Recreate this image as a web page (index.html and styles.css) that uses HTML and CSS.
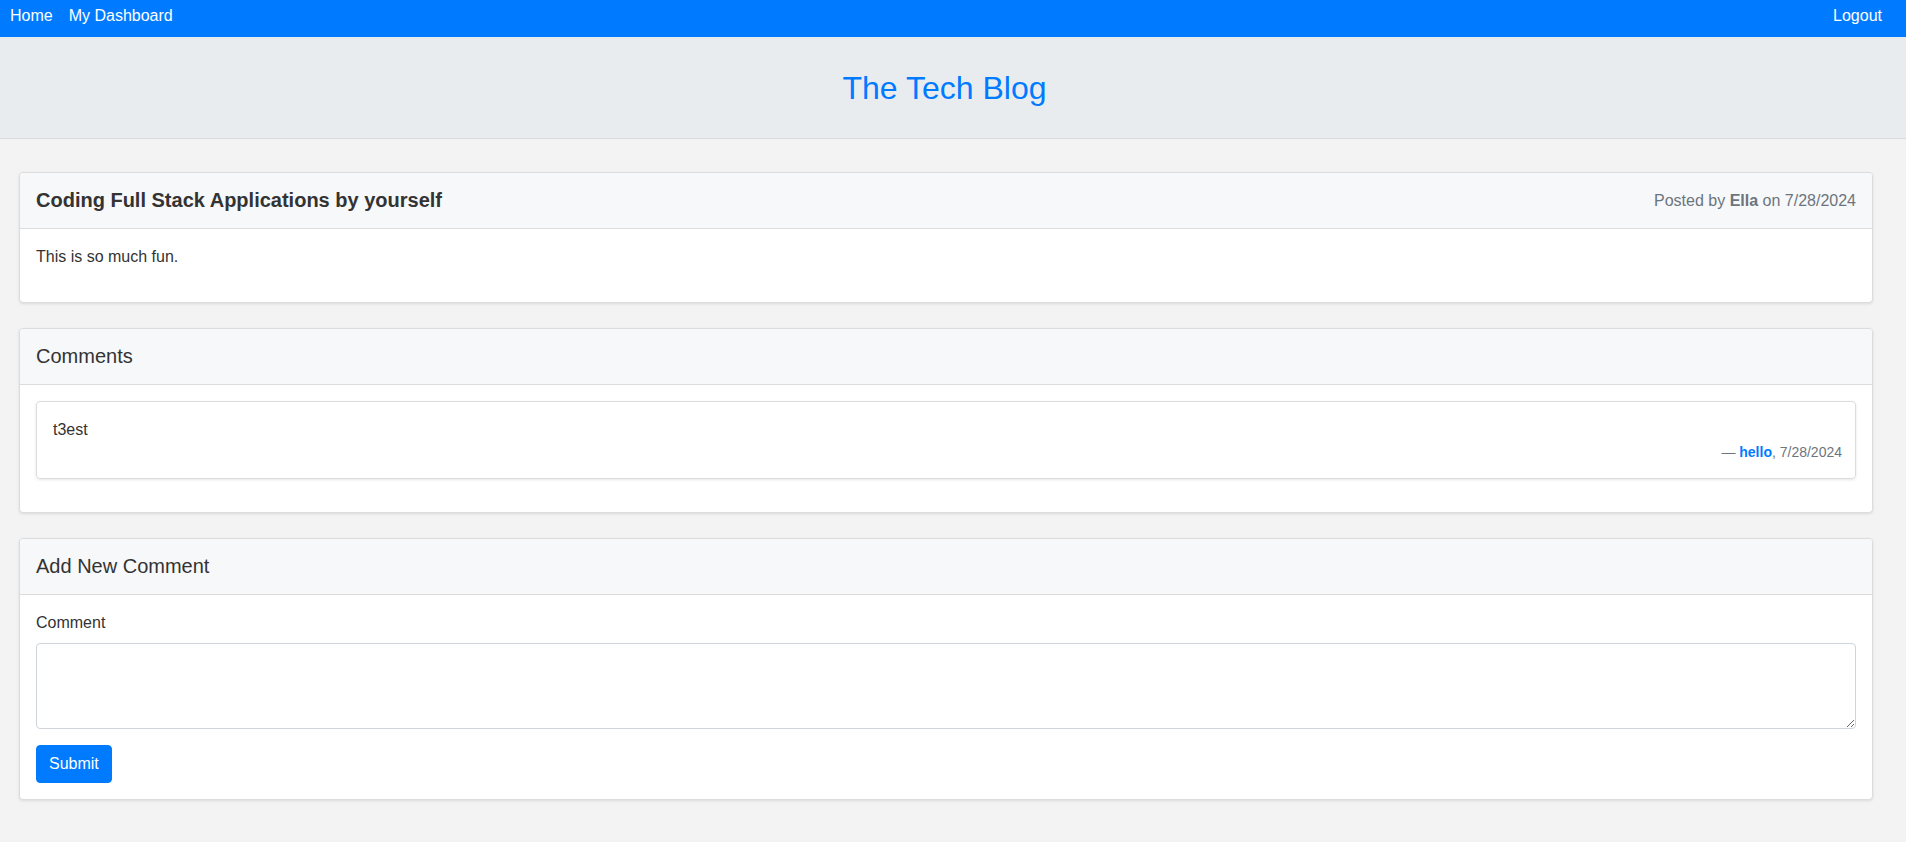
FILE: index.html
```html
<!DOCTYPE html>
<html lang="en">
<head>
<meta charset="utf-8">
<title>The Tech Blog</title>
<link rel="stylesheet" href="styles.css">
</head>
<body>
<nav class="topnav">
  <div class="nav-left">
    <a href="#" class="nav-link">Home</a>
    <a href="#" class="nav-link">My Dashboard</a>
  </div>
  <a href="#" class="nav-link">Logout</a>
</nav>
<header class="masthead">
  <h1 class="site-title">The Tech Blog</h1>
</header>
<main class="content">
  <section class="card">
    <div class="card-header header-split">
      <h2 class="post-title">Coding Full Stack Applications by yourself</h2>
      <span class="post-meta">Posted by <strong>Ella</strong> on 7/28/2024</span>
    </div>
    <div class="card-body">
      <p class="post-text">This is so much fun.</p>
    </div>
  </section>

  <section class="card">
    <div class="card-header">
      <h3 class="section-title">Comments</h3>
    </div>
    <div class="card-body">
      <div class="comment">
        <p class="comment-text">t3est</p>
        <div class="comment-footer">— <strong class="comment-author">hello</strong>, 7/28/2024</div>
      </div>
    </div>
  </section>

  <section class="card">
    <div class="card-header">
      <h3 class="section-title">Add New Comment</h3>
    </div>
    <div class="card-body">
      <form class="comment-form">
        <label class="form-label" for="comment">Comment</label>
        <textarea id="comment" class="form-control" rows="3"></textarea>
        <button type="button" class="btn-submit">Submit</button>
      </form>
    </div>
  </section>
</main>
</body>
</html>
```

FILE: styles.css
```css
* { box-sizing: border-box; }

html, body {
  margin: 0;
  padding: 0;
}

body {
  background: #f3f3f3;
  font-family: "Liberation Sans", Arial, sans-serif;
  font-size: 16px;
  line-height: 24px;
  color: #333333;
}

.topnav {
  height: 37px;
  background: #007bff;
  display: flex;
  justify-content: space-between;
  align-items: flex-start;
  padding: 4px 24px 0 10px;
}

.nav-left {
  display: flex;
  gap: 16px;
}

.nav-link {
  color: #ffffff;
  text-decoration: none;
  font-size: 16px;
  line-height: 24px;
}

.masthead {
  height: 102px;
  background: #e9ecef;
  border-bottom: 1px solid #d9dcdf;
  display: flex;
  align-items: center;
  justify-content: center;
  padding-right: 17px;
}

.site-title {
  margin: 0;
  font-size: 32px;
  font-weight: 400;
  line-height: 38px;
  color: #007bff;
}

.content {
  padding: 33px 33px 40px 19px;
  display: flex;
  flex-direction: column;
  gap: 25px;
}

.card {
  background: #ffffff;
  border: 1px solid #dcdcdc;
  border-radius: 4px;
  box-shadow: 0 1px 3px rgba(0, 0, 0, 0.1);
  overflow: hidden;
}

.card-header {
  background: #f7f8fa;
  border-bottom: 1px solid #dcdcdc;
  padding: 15px 16px;
  line-height: 25px;
}

.header-split {
  display: flex;
  justify-content: space-between;
  align-items: center;
}

.post-title {
  margin: 0;
  font-size: 20px;
  font-weight: 700;
  line-height: 25px;
  color: #333333;
}

.post-meta {
  font-size: 16px;
  color: #6c757d;
}

.post-meta strong {
  font-weight: 700;
}

.section-title {
  margin: 0;
  font-size: 20px;
  font-weight: 400;
  line-height: 25px;
  color: #333333;
}

.card-body {
  padding: 16px;
}

.post-text {
  margin: 0 0 17px;
}

.comment {
  border: 1px solid #dcdcdc;
  border-radius: 4px;
  box-shadow: 0 1px 3px rgba(0, 0, 0, 0.1);
  padding: 16px 13px 15px 16px;
  margin-bottom: 17px;
}

.comment-text {
  margin: 0;
  line-height: 24px;
}

.comment-footer {
  text-align: right;
  font-size: 14px;
  line-height: 21px;
  color: #6c757d;
}

.comment-author {
  color: #007bff;
  font-weight: 700;
}

.comment-form {
  display: flex;
  flex-direction: column;
  align-items: flex-start;
}

.form-label {
  display: block;
  margin-bottom: 8px;
  line-height: 24px;
}

.form-control {
  display: block;
  width: 100%;
  height: 86px;
  padding: 6px 12px;
  font-family: inherit;
  font-size: 16px;
  line-height: 24px;
  color: #495057;
  background: #ffffff;
  border: 1px solid #ced4da;
  border-radius: 4px;
  margin: 0 0 16px;
  resize: vertical;
}

.btn-submit {
  font-family: inherit;
  font-size: 16px;
  line-height: 24px;
  color: #ffffff;
  background: #007bff;
  border: 1px solid #007bff;
  border-radius: 4px;
  padding: 6px 12px;
  cursor: pointer;
}
```
